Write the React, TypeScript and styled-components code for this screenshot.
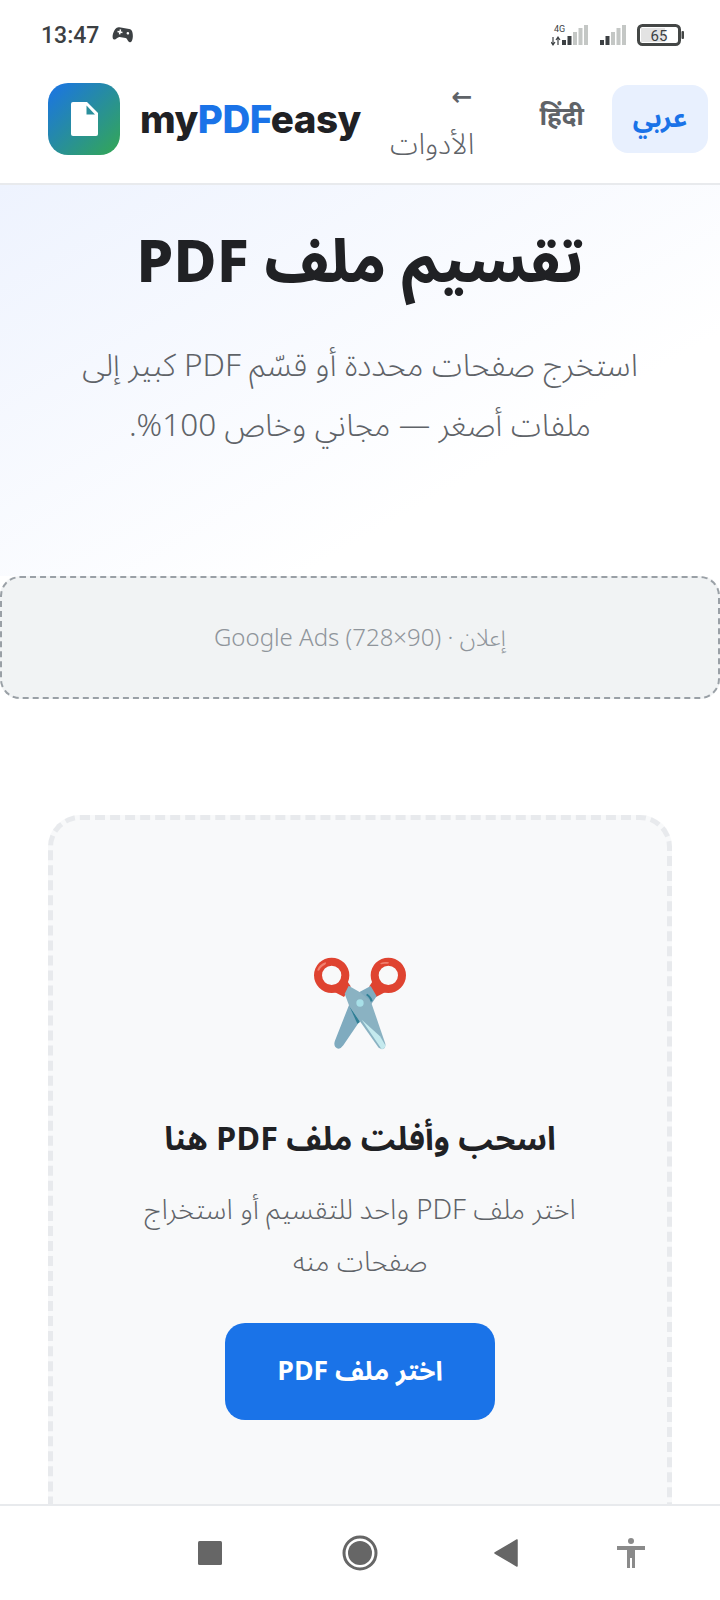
import styled, { createGlobalStyle } from "styled-components";

const GlobalStyle = createGlobalStyle`
  html, body {
    margin: 0;
    padding: 0;
    background: #ffffff;
  }
  * {
    box-sizing: border-box;
  }
`;

const ARABIC = `"Noto Sans Arabic", "Cairo", "DejaVu Sans", "Noto Sans", sans-serif`;

const Screen = styled.div`
  width: 720px;
  height: 1600px;
  display: flex;
  flex-direction: column;
  overflow: hidden;
  background: #fff;
  font-family: ${ARABIC};
`;

const StatusBar = styled.div`
  height: 62px;
  flex: none;
  display: flex;
  align-items: center;
  justify-content: space-between;
  padding: 8px 36px 0 41px;
  color: #3c4043;
`;

const StatusLeft = styled.div`
  display: flex;
  align-items: center;
  gap: 13px;
`;

const Time = styled.span`
  font-family: Roboto, sans-serif;
  font-weight: 500;
  font-size: 23px;
`;

const StatusRight = styled.div`
  display: flex;
  align-items: center;
  gap: 10px;
`;

const Header = styled.header`
  height: 123px;
  flex: none;
  display: flex;
  align-items: center;
  padding: 0 12px 8px 48px;
  border-bottom: 2px solid #e8eaed;
`;

const LogoTile = styled.div`
  width: 72px;
  height: 72px;
  flex: none;
  border-radius: 20px;
  background: linear-gradient(135deg, #1a73e8, #34a853);
  display: flex;
  align-items: center;
  justify-content: center;
`;

const Brand = styled.div`
  margin-left: 20px;
  font-family: Inter, sans-serif;
  font-weight: 800;
  font-size: 38.500px;
  letter-spacing: -0.5px;
  color: #202124;
`;

const BrandAccent = styled.span`
  color: #1a73e8;
`;

const ToolsLink = styled.a`
  width: 90px;
  flex: none;
  margin: 4px 0 0 auto;
  direction: rtl;
  font-size: 29px;
  font-weight: 300;
  line-height: 48px;
  color: #5f6368;
`;

const ToolsArrow = styled.span`
  display: block;
  height: 48px;
  padding-right: 2px;
  font-size: 25px;
  font-weight: 600;
`;

const ToolsLabel = styled.span`
  display: block;
  height: 48px;
`;

const LangLink = styled.a<{ $active?: boolean }>`
  width: ${({ $active }) => ($active ? "96px" : "auto")};
  height: 68px;
  flex: none;
  margin-left: ${({ $active }) => ($active ? "28px" : "65px")};
  padding-bottom: ${({ $active }) => ($active ? "0" : "4px")};
  border-radius: 16px;
  display: flex;
  align-items: center;
  justify-content: center;
  font-weight: 700;
  font-size: 26px;
  color: ${({ $active }) => ($active ? "#1a73e8" : "#5f6368")};
  background: ${({ $active }) => ($active ? "#e8f0fe" : "transparent")};
`;

const Main = styled.main`
  flex: 1;
  min-height: 0;
  overflow: hidden;
`;

const Hero = styled.section`
  height: 391px;
  padding-top: 37px;
  text-align: center;
  direction: rtl;
  background: linear-gradient(150deg, #eef3fe 0%, #ffffff 70%);
`;

const Title = styled.h1`
  margin: 0;
  font-size: 59px;
  font-weight: 800;
  line-height: 84px;
  color: #202124;
`;

const Subtitle = styled.p`
  margin: 30px auto 0;
  width: 610px;
  font-size: 31.500px;
  font-weight: 300;
  line-height: 60px;
  color: #5f6368;
`;

const AdSlot = styled.div`
  height: 123px;
  padding-top: 2px;
  border: 2px dashed #9aa0a6;
  border-radius: 20px;
  background: #f1f3f4;
  display: flex;
  align-items: center;
  justify-content: center;
  font-size: 24px;
  font-weight: 300;
  color: #8f959b;
  direction: rtl;
`;

const DropZone = styled.section`
  margin: 116px 48px 0;
  height: 800px;
  padding-top: 137px;
  border: 5px dashed #e8eaed;
  border-radius: 32px;
  background: #f8f9fa;
  display: flex;
  flex-direction: column;
  align-items: center;
  direction: rtl;
`;

const DropTitle = styled.h2`
  margin: 63px 0 0;
  font-size: 32.300px;
  font-weight: 700;
  line-height: 48px;
  color: #202124;
`;

const DropText = styled.p`
  margin: 20px 0 0;
  width: 470px;
  text-align: center;
  font-size: 27.600px;
  font-weight: 300;
  line-height: 52px;
  color: #5f6368;
`;

const ChooseButton = styled.button`
  margin-top: 35px;
  width: 270px;
  height: 97px;
  flex: none;
  border: none;
  border-radius: 20px;
  background: #1a73e8;
  color: #fff;
  font-family: inherit;
  font-size: 26.500px;
  font-weight: 700;
`;

const NavBar = styled.nav`
  height: 96px;
  flex: none;
  display: flex;
  align-items: center;
  padding-left: 135px;
  background: #fff;
  border-top: 2px solid #e8eaed;
`;

const NavSlot = styled.div<{ $width: number }>`
  width: ${({ $width }) => $width}px;
  display: flex;
  justify-content: center;
`;

function GamepadIcon() {
  return (
    <svg width="22" height="18" viewBox="0 0 22 18">
      <g transform="rotate(10 11 9)">
        <path fill="#3c4043" d="M6 2h10c3 0 4.500 3 5 7 .4 3.500-.4 6-2 6-2 0-3-3.500-5-3.500H8C6 11.500 5 15 3 15c-1.600 0-2.400-2.500-2-6 .5-4 2-7 5-7z" />
        <circle cx="15.500" cy="6.500" r="1.300" fill="#fff" />
        <rect x="5" y="5.800" width="5" height="1.500" fill="#fff" />
        <rect x="6.800" y="4" width="1.500" height="5" fill="#fff" />
      </g>
    </svg>
  );
}

function SignalBars({ withLabel }: { withLabel?: boolean }) {
  const heights = [5, 9, 13, 17, 20];
  return (
    <svg width={withLabel ? 38 : 28} height="24" viewBox={withLabel ? "-10 0 38 24" : "0 0 28 24"}>
      {withLabel && (
        <>
          <text x="-7" y="9" fontFamily="Roboto, sans-serif" fontSize="9" fill="#3c4043">4G</text>
          <path d="M-8 14v7M-10 19l2 3 2-3M-3 22v-7M-5 17l2-3 2 3" fill="none" stroke="#3c4043" strokeWidth="1.200" />
        </>
      )}
      {heights.map((h, i) => (
        <rect key={i} x={1 + i * 5.500} y={22 - h} width="4" height={h} fill={i < 2 ? "#3c4043" : "#c4c7c5"} />
      ))}
    </svg>
  );
}

function Battery() {
  return (
    <svg width="47" height="22" viewBox="0 0 47 22">
      <rect x="1.500" y="1.500" width="41" height="19" rx="4" fill="none" stroke="#444746" strokeWidth="3" />
      <rect x="4" y="4" width="24" height="14" fill="#e3e3e3" />
      <rect x="44.500" y="7" width="2.500" height="8" rx="1" fill="#444746" />
      <text x="22" y="16.500" textAnchor="middle" fontFamily="Roboto, sans-serif" fontSize="15" fill="#3c4043">65</text>
    </svg>
  );
}

function PageIcon() {
  return (
    <svg width="27" height="34" viewBox="0 0 27 34">
      <path fill="#fff" d="M2 0h14l11 11v21a2 2 0 0 1-2 2H2a2 2 0 0 1-2-2V2a2 2 0 0 1 2-2z" />
      <path fill="#2a8f9c" d="M15.500 3.500l8.500 9h-8.500z" />
    </svg>
  );
}

function Scissors() {
  return (
    <svg width="96" height="96" viewBox="96 80 288 288">
      <path fill="#df4330" d="M200 150l12 18-20 32-27-14z" />
      <path fill="#df4330" d="M280 150l-12 18 20 32 27-14z" />
      <path fill="#df4330" fillRule="evenodd" d="M102 135a53 53 0 1 0 106 0a53 53 0 1 0-106 0zM126 135a29 29 0 1 1 58 0a29 29 0 1 1-58 0z" />
      <path fill="#df4330" fillRule="evenodd" d="M272 135a53 53 0 1 0 106 0a53 53 0 1 0-106 0zM296 135a29 29 0 1 1 58 0a29 29 0 1 1-58 0z" />
      <path fill="#f0806f" d="M112 118c4-10 12-18 24-22 4 2 2 6-2 8-8 4-12 8-16 16-2 2-6 2-6-2z" />
      <path fill="#f0806f" d="M302 98c8-4 16-4 24-2 2 2 0 4-4 4-6 0-12 0-18 2-2 0-4-2-2-4z" />
      <path fill="#7fabbf" d="M272 167L290 198 242 268 190 345Q178 362 166 350 160 342 166 328L208 222 240 184z" />
      <path fill="#2f7f95" d="M207 225l33 50-8 5z" />
      <path fill="#8ab2c2" d="M206 166L240 186 272 212 316 340Q318 354 306 357L296 352 208 228 194 190z" />
      <path fill="#c5eaee" d="M245 268l55 50 16 27q0 10-11 12z" />
      <path fill="#2f7f95" d="M262 190c8 6 14 12 16 22l-6 2c-2-8-6-14-14-20z" />
      <circle cx="240" cy="218" r="11" fill="#a8e0e8" />
    </svg>
  );
}

function SquareKey() {
  return (
    <svg width="24" height="24" viewBox="0 0 24 24">
      <rect width="24" height="24" rx="1.500" fill="#666" />
    </svg>
  );
}

function HomeKey() {
  return (
    <svg width="36" height="36" viewBox="0 0 36 36">
      <circle cx="18" cy="18" r="16" fill="none" stroke="#666" strokeWidth="3" />
      <circle cx="18" cy="18" r="12" fill="#666" />
    </svg>
  );
}

function BackKey() {
  return (
    <svg width="24" height="28" viewBox="0 0 24 28">
      <path fill="#666" stroke="#666" strokeWidth="1.500" strokeLinejoin="round" d="M1 14L23 1v26z" />
    </svg>
  );
}

function AccessKey() {
  return (
    <svg width="28" height="30" viewBox="0 0 28 30">
      <circle cx="14" cy="3" r="3" fill="#8a8a8a" />
      <path fill="#8a8a8a" d="M0 8h28v4H18v18h-3V20h-2v10h-3V12H0z" />
    </svg>
  );
}

export default function App() {
  return (
    <Screen>
      <GlobalStyle />
      <StatusBar>
        <StatusLeft>
          <Time>13:47</Time>
          <GamepadIcon />
        </StatusLeft>
        <StatusRight>
          <SignalBars withLabel />
          <SignalBars />
          <Battery />
        </StatusRight>
      </StatusBar>
      <Header>
        <LogoTile>
          <PageIcon />
        </LogoTile>
        <Brand>
          my<BrandAccent>PDF</BrandAccent>easy
        </Brand>
        <ToolsLink>
          <ToolsArrow>←</ToolsArrow>
          <ToolsLabel>الأدوات</ToolsLabel>
        </ToolsLink>
        <LangLink>हिंदी</LangLink>
        <LangLink $active>عربي</LangLink>
      </Header>
      <Main>
        <Hero>
          <Title>تقسيم ملف PDF</Title>
          <Subtitle>استخرج صفحات محددة أو قسّم PDF كبير إلى ملفات أصغر — مجاني وخاص 100%.</Subtitle>
        </Hero>
        <AdSlot>إعلان · Google Ads (728×90)</AdSlot>
        <DropZone>
          <Scissors />
          <DropTitle>اسحب وأفلت ملف PDF هنا</DropTitle>
          <DropText>اختر ملف PDF واحد للتقسيم أو استخراج صفحات منه</DropText>
          <ChooseButton>اختر ملف PDF</ChooseButton>
        </DropZone>
      </Main>
      <NavBar>
        <NavSlot $width={150}><SquareKey /></NavSlot>
        <NavSlot $width={150}><HomeKey /></NavSlot>
        <NavSlot $width={142}><BackKey /></NavSlot>
        <NavSlot $width={108}><AccessKey /></NavSlot>
      </NavBar>
    </Screen>
  );
}
